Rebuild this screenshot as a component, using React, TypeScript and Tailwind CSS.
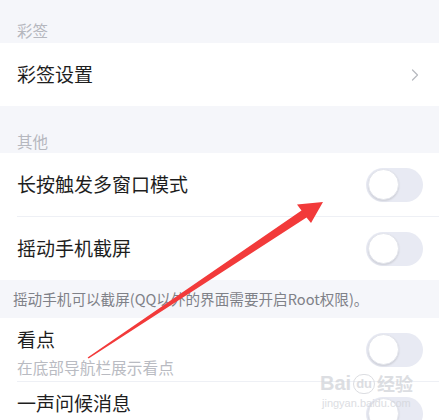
import { ChevronRight } from 'lucide-react';

const font = { fontFamily: '"Noto Sans CJK SC", "Noto Sans", sans-serif' };

function Toggle() {
  return (
    <div className="w-[57px] h-[34px] rounded-full bg-[#e8eaf3] flex items-center pl-[2px]">
      <div className="w-[31px] h-[31px] rounded-full bg-white border border-[#e3e5ec] shadow-[0_1px_2px_rgba(0,0,0,0.12)]" />
    </div>
  );
}

function SectionLabel({ text, top }: { text: string; top: string }) {
  return <div className={`${top} pl-[17px] text-[15.5px] leading-[22px] text-[#b5b7be]`}>{text}</div>;
}

function SwitchRow({ title }: { title: string }) {
  return (
    <div className="h-[63px] flex items-center justify-between pl-[17px] pr-[16px]">
      <span className="text-[19px] text-[#1e1e1e]">{title}</span>
      <Toggle />
    </div>
  );
}

function DetailRow({ title, desc }: { title: string; desc?: string }) {
  return (
    <div className="h-[63px] flex items-center justify-between pl-[17px] pr-[16px]">
      <div className="self-start pt-[8px]">
        <p className="text-[19px] leading-[26px] text-[#1e1e1e]">{title}</p>
        {desc && <p className="text-[15.7px] leading-[22px] mt-[5px] text-[#b9bbc2]">{desc}</p>}
      </div>
      <Toggle />
    </div>
  );
}

export default function App() {
  return (
    <div className="relative w-[439px] h-[420px] overflow-hidden bg-[#f5f6fa]" style={font}>
      <SectionLabel text="彩签" top="pt-[19px] pb-[2px]" />
      <div className="bg-white h-[63px] flex items-center justify-between pl-[17px] pr-[14px]">
        <span className="text-[19px] text-[#1e1e1e]">彩签设置</span>
        <ChevronRight size={20} strokeWidth={1.5} className="text-[#b8bac0]" />
      </div>
      <SectionLabel text="其他" top="pt-[24px] pb-[1px]" />
      <div className="bg-white">
        <SwitchRow title="长按触发多窗口模式" />
        <div className="ml-[17px] h-px bg-[#eef0f5]" />
        <SwitchRow title="摇动手机截屏" />
      </div>
      <div className="h-[38px] flex items-center pl-[13px] text-[14.6px] text-[#7f8188] whitespace-nowrap">
        摇动手机可以截屏(QQ以外的界面需要开启Root权限)。
      </div>
      <div className="bg-white">
        <DetailRow title="看点" desc="在底部导航栏展示看点" />
        <div className="ml-[17px] h-px bg-[#eef0f5]" />
        <DetailRow title="一声问候消息" />
      </div>

      {/* red annotation arrow */}
      <svg className="absolute inset-0 pointer-events-none" width="439" height="420">
        <polygon
          points="87.6,357.6 301.5,210.5 297,204.5 323,202 311,223 306.5,217.5 88.6,358.6"
          fill="#f23a3a"
        />
      </svg>

      {/* watermark */}
      <div className="absolute left-[320px] top-[372px] pointer-events-none text-[#d4d6db] opacity-80">
        <div className="flex items-end gap-[2px] text-[20px] leading-[22px] font-bold" style={{ fontFamily: '"Liberation Sans", "Noto Sans CJK SC", sans-serif' }}>
          <span>Bai</span>
          <span className="text-[13px] leading-[18px] rounded-full border border-[#d4d6db] px-[2px]">du</span>
          <span className="text-[18px]" style={font}>经验</span>
        </div>
        <div className="text-[11px] leading-[14px] mt-[2px] ml-[2px]" style={{ fontFamily: '"Liberation Sans", sans-serif' }}>
          jingyan.baidu.com
        </div>
      </div>
    </div>
  );
}
